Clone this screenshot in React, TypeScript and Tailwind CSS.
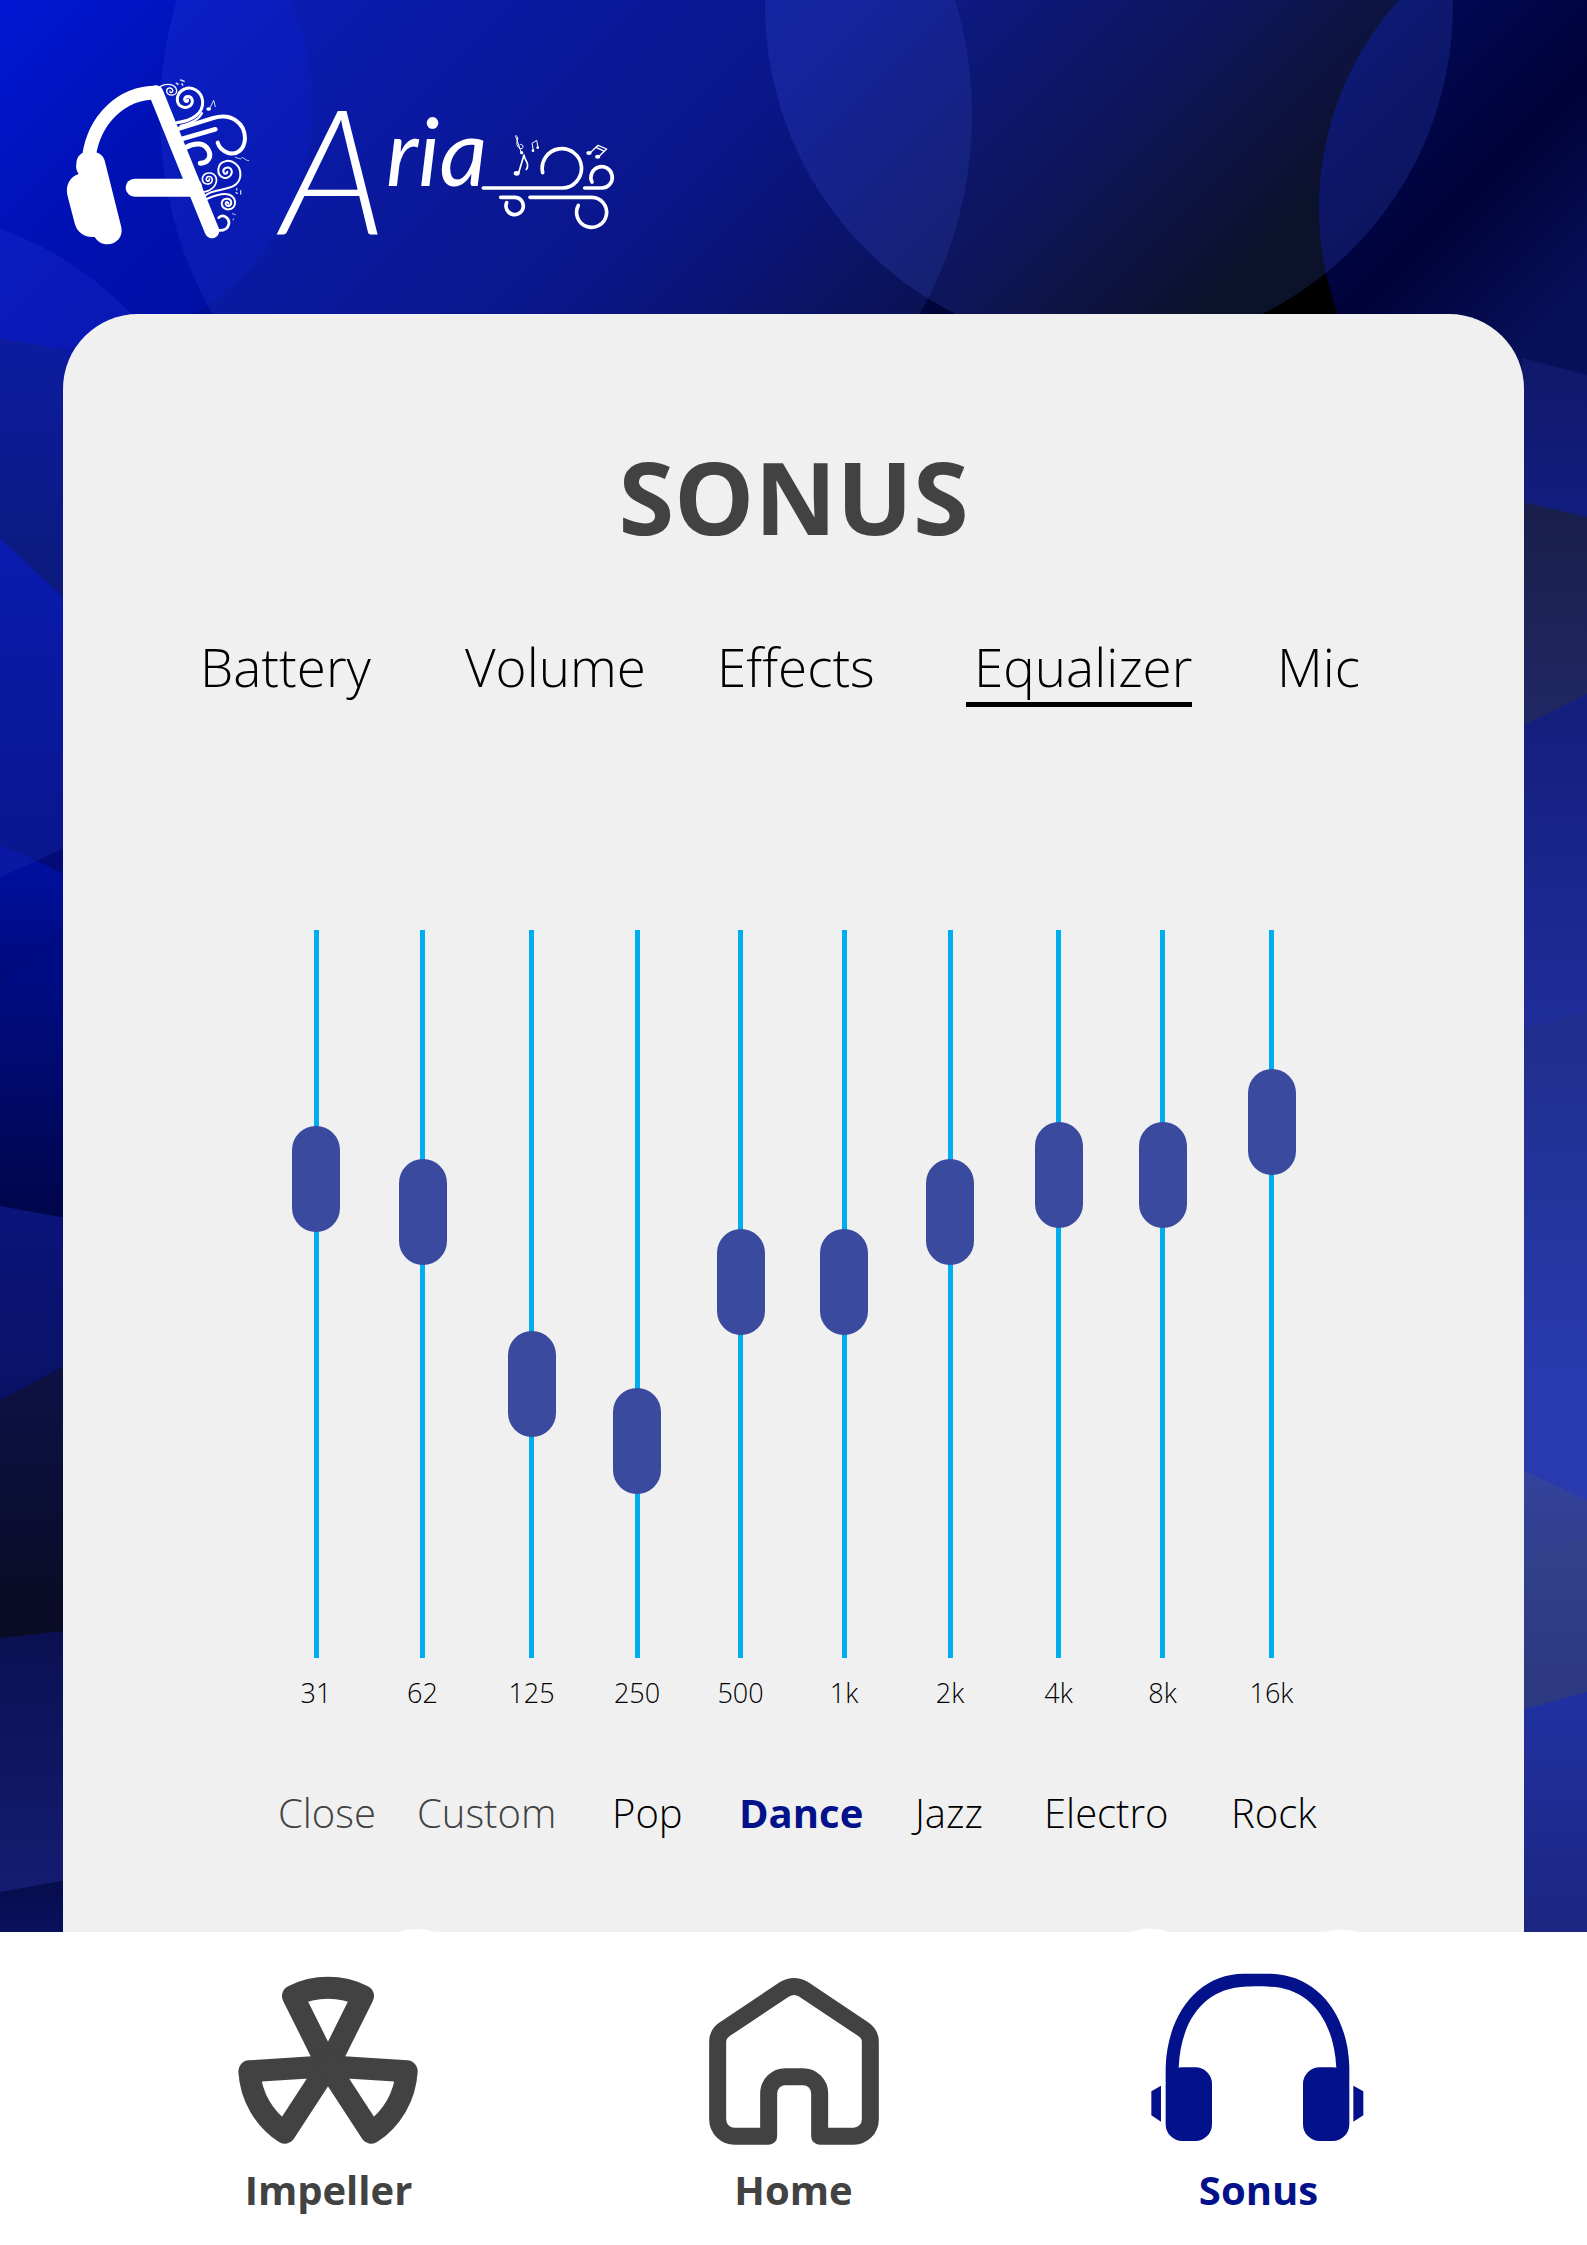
import { useState } from "react";

type Band = { left: number; right: number; from: string; to: string; end: number };

const leftBands: Band[] = [
  { left: 338, right: 350, from: "#0d1ca0", to: "#0c1a7c", end: 600 },
  { left: 538, right: 600, from: "#0a1bb0", to: "#0a168c", end: 870 },
  { left: 877, right: 848, from: "#000f9c", to: "#000a78", end: 985 },
  { left: 985, right: 922, from: "#000c82", to: "#00064c", end: 1210 },
  { left: 1206, right: 1218, from: "#0a147a", to: "#0a1266", end: 1400 },
  { left: 1400, right: 1365, from: "#0c1142", to: "#0a0c26", end: 1600 },
  { left: 1638, right: 1631, from: "#0a1152", to: "#131c70", end: 1880 },
  { left: 1892, right: 1880, from: "#060e50", to: "#08115c", end: 1932 },
];

const rightBands: Band[] = [
  { left: 358, right: 375, from: "#10186a", to: "#121e7e", end: 510 },
  { left: 502, right: 517, from: "#191e4a", to: "#202864", end: 720 },
  { left: 726, right: 694, from: "#141f7e", to: "#1f2d9a", end: 1020 },
  { left: 1030, right: 1012, from: "#1f2e8c", to: "#293aae", end: 1370 },
  { left: 1470, right: 1500, from: "#34429c", to: "#303f8e", end: 1550 },
  { left: 1560, right: 1535, from: "#30408a", to: "#2c3880", end: 1710 },
  { left: 1710, right: 1692, from: "#2130a0", to: "#1b2680", end: 1932 },
];

function Bands({ id, bands, x1, x2 }: { id: string; bands: Band[]; x1: number; x2: number }) {
  return (
    <>
      {bands.map((b, i) => (
        <g key={i}>
          <linearGradient id={`${id}${i}`} gradientUnits="userSpaceOnUse" x1="0" x2="0" y1={b.left} y2={b.end}>
            <stop offset="0" stopColor={b.from} />
            <stop offset="1" stopColor={b.to} />
          </linearGradient>
          <path d={`M${x1} ${b.left}L${x2} ${b.right}V2245H${x1}Z`} fill={`url(#${id}${i})`} />
        </g>
      ))}
    </>
  );
}

function Backdrop() {
  return (
    <svg
      aria-hidden="true"
      className="absolute inset-0 -z-10 h-full w-full"
      viewBox="0 0 1587 2245"
      preserveAspectRatio="none"
    >
      <defs>
        <linearGradient id="base" gradientUnits="userSpaceOnUse" x1="0" y1="0" x2="800" y2="800">
          <stop offset="0" stopColor="#0019d2" />
          <stop offset="0.2" stopColor="#000fa4" />
          <stop offset="0.55" stopColor="#000a76" />
          <stop offset="0.78" stopColor="#000538" />
          <stop offset="0.95" stopColor="#000000" />
        </linearGradient>
        <linearGradient id="night" gradientUnits="userSpaceOnUse" x1="700" y1="700" x2="940" y2="940">
          <stop offset="0" stopColor="#000a58" />
          <stop offset="0.56" stopColor="#000238" />
          <stop offset="1" stopColor="#07115a" />
        </linearGradient>
      </defs>
      <rect width="1587" height="2245" fill="url(#base)" />
      <circle cx="70" cy="105" r="243" fill="#0018d8" fillOpacity="0.25" />
      <circle cx="-117" cy="552" r="344" fill="#5060ff" fillOpacity="0.13" />
      <circle cx="566" cy="115" r="406" fill="#4c6cff" fillOpacity="0.13" />
      <circle cx="1629" cy="208" r="310" fill="url(#night)" />
      <circle cx="1109" cy="6" r="344" fill="#5068ff" fillOpacity="0.17" />
      <Bands id="l" bands={leftBands} x1={0} x2={66} />
      <path d="M0 845L37 861L0 877Z" fill="#0a18a4" />
      <path d="M37 861L66 847V875Z" fill="#020b76" />
      <Bands id="r" bands={rightBands} x1={1522} x2={1587} />
    </svg>
  );
}

function LogoMark() {
  return (
    <svg aria-hidden="true" viewBox="0 0 660 600" className="h-[200px] w-[220px] shrink-0">
      <g fill="none" stroke="#fff" strokeLinecap="round">
        <path d="M117 288C132 182 210 98 320 98" strokeWidth="41" strokeLinecap="butt" />
        <path d="M318 98L486 513" strokeWidth="44" />
        <path d="M254 383H430" strokeWidth="54" />
        <path d="M330 80C350 68 378 72 380 92C380 110 349 110 350 92C352 80 370 82 368 94C366 100 358 98 360 93" strokeWidth="4" />
        <path d="M380 188C430 182 460 158 458 124C455 92 424 78 404 87C380 96 376 124 390 137C404 148 428 141 427 121C424 105 402 106 404 120C406 126 412 126 413 121" strokeWidth="9" />
        <path d="M384 207L490 174C545 158 585 190 585 235C583 270 560 286 535 279C517 273 507 262 503 248" strokeWidth="12" />
        <path d="M392 198C425 190 446 180 456 160" strokeWidth="7" />
        <path d="M395 237L496 208" strokeWidth="14" />
        <path d="M408 262C438 245 464 250 475 270C486 290 474 309 451 310" strokeWidth="15" />
        <path d="M460 396C488 392 504 372 498 352C490 333 460 335 457 356C458 376 486 378 487 359C485 346 467 347 469 359C471 366 479 364 478 357" strokeWidth="5" />
        <path d="M465 407C495 380 565 398 571 348C574 315 545 298 525 304C498 312 500 346 520 353C540 358 551 338 542 326C531 317 516 327 521 338C525 344 533 341 532 335" strokeWidth="6" />
        <path d="M470 417C510 400 547 392 555 424C558 453 517 457 515 430C517 413 542 411 544 428C543 441 526 441 527 430C529 424 536 426 535 431" strokeWidth="6" />
        <path d="M506 473C520 461 537 473 537 489C535 507 520 512 508 511" strokeWidth="8" />
        <path d="M479 146L491 121L496 140" strokeWidth="2.5" />
        <path d="M556 292L572 297Q576 288 582 295T596 302" strokeWidth="3" opacity="0.7" />
        <path d="M392 60L402 64M379 70L384 73M396 72L398 75" strokeWidth="5" opacity="0.8" />
        <path d="M560 386V390M572 392V402M558 398L562 400" strokeWidth="4" opacity="0.8" />
        <path d="M547 461L556 464M549 480L551 476" strokeWidth="3" opacity="0.7" />
      </g>
      <ellipse cx="476" cy="147" rx="7" ry="5" fill="#fff" />
      <path
        d="M79 312C79 286 98 272 128 275C149 277 160 286 165 305L214 502C220 530 200 553 172 553C155 553 142 544 134 531C102 534 80 515 74 490L52 405C46 375 60 350 86 342C79 332 77 322 79 312Z"
        fill="#fff"
      />
    </svg>
  );
}

function Wordmark() {
  return (
    <svg
      role="img"
      aria-label="Aria"
      viewBox="0 0 1080 600"
      className="h-[200px] w-[360px] shrink-0 overflow-visible"
    >
      <g fill="#fff" fontFamily="Lato, sans-serif" fontStyle="italic">
        <text x="32" y="522" fontSize="520" fontWeight="300">A</text>
        <text x="348" y="378" fontSize="280" fontWeight="400">ria</text>
      </g>
      <g fill="none" stroke="#fff" strokeWidth="11" strokeLinecap="round">
        <path d="M640 384H877A59 59 0 1 0 818 338" />
        <path d="M944 384H996A32 32 0 1 0 966 366" />
        <path d="M692 412H733A26 26 0 1 1 710 428" />
        <path d="M780 412H966A45 45 0 1 1 925 436" />
      </g>
      <g fill="none" stroke="#fff" strokeWidth="3" strokeLinejoin="round">
        <path d="M746 338L762 285C762 300 782 310 768 330" strokeWidth="5" />
        <path d="M754 278L738 232C732 222 746 228 743 240C736 250 744 268 756 266C764 258 754 248 748 256" />
        <path d="M790 270L786 250L800 241L804 262" />
        <path d="M960 279L984 256L1010 267L987 289M978 262L1004 274" strokeWidth="4" />
      </g>
      <g fill="#fff">
        <ellipse cx="740" cy="340" rx="9" ry="7" />
        <circle cx="755" cy="278" r="5" />
        <circle cx="789" cy="272" r="4" />
        <circle cx="803" cy="263" r="4" />
        <ellipse cx="957" cy="279" rx="8" ry="6" />
        <ellipse cx="983" cy="290" rx="8" ry="6" />
      </g>
    </svg>
  );
}

function ImpellerIcon() {
  return (
    <svg aria-hidden="true" viewBox="-2 90 660 540" className="h-[180px] w-[220px]">
      <g fill="none" stroke="currentColor" strokeWidth="66" strokeLinejoin="round">
        <path d="M325 379L220 168A237 237 0 0 1 430 168Z" />
        <path d="M325 379L89 394A237 237 0 0 0 195 578Z" />
        <path d="M325 379L561 394A237 237 0 0 1 455 578Z" />
      </g>
    </svg>
  );
}

function HomeIcon() {
  return (
    <svg aria-hidden="true" viewBox="-19 90 660 540" className="h-[180px] w-[220px]">
      <path
        d="M235 589H133A51 51 0 0 1 82 539V305Q82 281 104 267L282 148Q311 131 340 148L518 267Q540 282 540 305V539A51 51 0 0 1 490 589H388V460A50 50 0 0 0 338 410H285A50 50 0 0 0 235 460Z"
        fill="none"
        stroke="currentColor"
        strokeWidth="51"
        strokeLinejoin="round"
      />
    </svg>
  );
}

function HeadphonesIcon() {
  return (
    <svg aria-hidden="true" viewBox="56 210 660 540" className="h-[180px] w-[220px]">
      <path
        d="M106 545V500C112 340 205 222 340 221H422C560 225 652 340 657 500V545H618V503C610 350 530 264 420 260C390 258 370 258 340 260C230 266 152 350 145 503V545Z"
        fill="currentColor"
      />
      <g fill="currentColor">
        <rect x="106" y="502" width="139" height="221" rx="50" />
        <rect x="518" y="502" width="139" height="221" rx="50" />
        <path d="M92 557L63 574V646L92 665ZM669 557L699 574V646L669 665Z" />
      </g>
    </svg>
  );
}

const tabs = ["Battery", "Volume", "Effects", "Equalizer", "Mic"];

const startLevels = [
  { label: "31", gain: 4.42 },
  { label: "62", gain: 3.15 },
  { label: "125", gain: -3.46 },
  { label: "250", gain: -5.66 },
  { label: "500", gain: 0.48 },
  { label: "1k", gain: 0.48 },
  { label: "2k", gain: 3.15 },
  { label: "4k", gain: 4.58 },
  { label: "8k", gain: 4.58 },
  { label: "16k", gain: 6.63 },
];

const presets = [
  { name: "Close", tone: "font-light text-[#424242]" },
  { name: "Custom", tone: "font-light text-[#424242]" },
  { name: "Pop", tone: "font-light text-black" },
  { name: "Dance", tone: "font-bold text-[#03118a]" },
  { name: "Jazz", tone: "font-light text-black" },
  { name: "Electro", tone: "font-light text-black" },
  { name: "Rock", tone: "font-light text-black" },
];

const navItems = [
  { name: "Impeller", Icon: ImpellerIcon, tone: "text-[#424242]" },
  { name: "Home", Icon: HomeIcon, tone: "text-[#424242]" },
  { name: "Sonus", Icon: HeadphonesIcon, tone: "text-[#03118a]" },
];

export default function App() {
  const [levels, setLevels] = useState(startLevels);

  return (
    <div className="relative isolate flex min-h-screen flex-col font-['Open_Sans',sans-serif]">
      <Backdrop />
      <header className="flex px-[50px] pt-[60px] pb-[54px]">
        <LogoMark />
        <Wordmark />
      </header>

      <main className="mx-[63px] grow rounded-t-[75px] bg-[#f0f0f0] pt-[122px] pb-[91px]">
        <h1 className="text-center text-[101px] leading-[120px] font-bold text-[#424242]">SONUS</h1>

        <div
          role="tablist"
          className="mt-[75px] grid grid-cols-[265fr_252fr_249fr_311fr_247fr] justify-items-start pl-[137px]"
        >
          {tabs.map((tab) => (
            <button
              key={tab}
              type="button"
              role="tab"
              aria-selected={tab === "Equalizer"}
              className="border-b-[5px] border-transparent text-[53px] leading-[71px] font-light text-black aria-selected:border-black aria-selected:pl-2"
            >
              {tab}
            </button>
          ))}
        </div>

        <div className="mt-[223px] grid grid-cols-[106fr_107fr_111fr_100fr_107fr_100fr_112fr_105fr_103fr_115fr] pr-[195px] pl-[200px]">
          {levels.map((level, i) => (
            <label key={level.label} className="flex flex-col items-center gap-[17px]">
              <input
                type="range"
                min={-12}
                max={12}
                step="any"
                value={level.gain}
                onChange={(e) =>
                  setLevels(levels.map((l, j) => (j === i ? { ...l, gain: Number(e.target.value) } : l)))
                }
                className="h-[728px] w-12 cursor-pointer appearance-none bg-[linear-gradient(#00adef,#00adef)] bg-[length:5px_100%] bg-center bg-no-repeat [direction:rtl] [writing-mode:vertical-lr] [&::-webkit-slider-thumb]:h-[106px] [&::-webkit-slider-thumb]:w-12 [&::-webkit-slider-thumb]:appearance-none [&::-webkit-slider-thumb]:rounded-3xl [&::-webkit-slider-thumb]:bg-[#3a4a9f]"
              />
              <span className="text-[27px] leading-9 font-light text-black">{level.label}</span>
            </label>
          ))}
        </div>

        <div className="mt-[74px] grid grid-cols-[139fr_195fr_127fr_176fr_129fr_187fr_293fr] justify-items-start pl-[215px]">
          {presets.map((preset) => (
            <button key={preset.name} type="button" className={`text-[40px] leading-[56px] ${preset.tone}`}>
              {preset.name}
            </button>
          ))}
        </div>
      </main>

      <nav className="relative grid grid-cols-3 bg-white px-24 pt-[38px] pb-[27px]">
        <svg
          aria-hidden="true"
          viewBox="0 0 1587 4"
          preserveAspectRatio="none"
          className="absolute -top-1 left-0 h-1 w-full"
        >
          <path d="M398 4Q417 -2 436 4ZM1131 4Q1150 -3 1169 4ZM1324 4Q1341 -1 1358 4Z" fill="#fff" />
        </svg>
        {navItems.map(({ name, Icon, tone }) => (
          <a key={name} href={`#${name.toLowerCase()}`} className={`flex flex-col items-center gap-3 ${tone}`}>
            <Icon />
            <span className="text-[40px] leading-[56px] font-bold">{name}</span>
          </a>
        ))}
      </nav>
    </div>
  );
}
